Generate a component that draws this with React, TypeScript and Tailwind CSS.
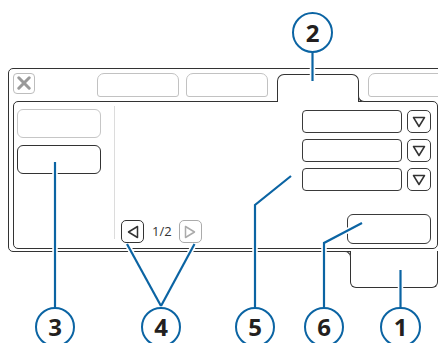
import React from "react";

function TriDown() {
  return (
    <svg width="14" height="12" viewBox="0 0 14 12">
      <polygon points="1.5,1.5 12.5,1.5 7,10.5" fill="none" stroke="#333" strokeWidth="1.5" strokeLinejoin="round" />
    </svg>
  );
}

function TriLeft({ color }: { color: string }) {
  return (
    <svg width="12" height="14" viewBox="0 0 12 14">
      <polygon points="10.5,1.5 10.5,12.5 1.5,7" fill="none" stroke={color} strokeWidth="1.5" strokeLinejoin="round" />
    </svg>
  );
}

function TriRight({ color }: { color: string }) {
  return (
    <svg width="12" height="14" viewBox="0 0 12 14">
      <polygon points="1.5,1.5 1.5,12.5 10.5,7" fill="none" stroke={color} strokeWidth="1.5" strokeLinejoin="round" />
    </svg>
  );
}

function FieldRow() {
  return (
    <div className="flex items-center justify-end gap-[5px]">
      <div className="w-[100px] h-[23px] border-[1.5px] border-[#3a3a3a] rounded-[4px]" />
      <div className="w-[24px] h-[23px] border-[1.5px] border-[#3a3a3a] rounded-[5px] flex items-center justify-center">
        <TriDown />
      </div>
    </div>
  );
}

const BLUE = "#0b64a3";

type Pt = [number, number];
const leaders: Pt[][] = [
  [[312.5, 52], [312.5, 81]],
  [[55, 162], [55, 307]],
  [[127, 244], [161, 306]],
  [[194.5, 244], [161, 306]],
  [[255, 307], [255, 205], [291, 176]],
  [[324, 307], [324, 243], [362, 223]],
  [[400.5, 270], [400.5, 307]],
];

const circles: { n: string; x: number; y: number }[] = [
  { n: "2", x: 312.5, y: 32.5 },
  { n: "3", x: 55, y: 327 },
  { n: "4", x: 161, y: 327 },
  { n: "5", x: 255, y: 327 },
  { n: "6", x: 324, y: 327 },
  { n: "1", x: 400.5, y: 327 },
];

export default function App() {
  return (
    <div className="relative w-[438px] h-[343px] overflow-hidden bg-white font-['Open_Sans',sans-serif]">
      <div className="pt-[67.5px] pl-[8px]">
        {/* outer window frame */}
        <div className="w-[460px] border-[1.5px] border-[#333] rounded-[5px] pl-[3.5px] pb-[2.5px]">
          {/* header: close + tabs */}
          <div className="flex items-end h-[32px]">
            <div className="relative mb-[7px] w-[22px] h-[21px] border-[1.5px] border-[#bdbdbd] rounded-[4px] flex items-center justify-center">
              <svg width="14" height="14" viewBox="0 0 14 14">
                <line x1="1.8" y1="1.8" x2="12.2" y2="12.2" stroke="#9a9a9a" strokeWidth="3" strokeLinecap="round" />
                <line x1="12.2" y1="1.8" x2="1.8" y2="12.2" stroke="#9a9a9a" strokeWidth="3" strokeLinecap="round" />
              </svg>
            </div>
            <div className="ml-[62px] mb-[4px] w-[82px] h-[24px] border-[1.5px] border-[#c2c2c2] rounded-t-[7px] rounded-b-[3px]" />
            <div className="ml-[7px] mb-[4px] w-[82px] h-[24px] border-[1.5px] border-[#c2c2c2] rounded-t-[7px] rounded-b-[3px]" />
            <div className="relative z-10 ml-[9px] -mb-[1.5px] w-[82px] h-[28.5px] bg-white border-[1.5px] border-b-0 border-[#333] rounded-t-[7px]">
              <div className="absolute left-full bottom-0 w-[8px] h-[8px] bg-white border-l-[1.5px] border-b-[1.5px] border-[#333] rounded-bl-[6px]" />
            </div>
            <div className="ml-[9px] mb-[4px] w-[82px] h-[24px] border-[1.5px] border-[#c2c2c2] rounded-t-[7px] rounded-b-[3px]" />
          </div>
          {/* inner panel */}
          <div className="flex w-[425px] h-[148px] border-[1.5px] border-[#333] rounded-[5px]">
            <div className="w-[100.5px] pl-[3.5px] pt-[7.5px] flex flex-col gap-[7px]">
              <div className="w-[84px] h-[29px] border-[1.5px] border-[#c6c6c6] rounded-[6px]" />
              <div className="w-[84px] h-[29px] border-[1.5px] border-[#333] rounded-[6px]" />
            </div>
            <div className="w-px mt-[4.5px] mb-[8.5px] bg-[#dcdcdc]" />
            <div className="flex-1 flex flex-col pt-[8.5px] pr-[5.5px] pb-[3.5px]">
              <div className="flex flex-col gap-[6px]">
                <FieldRow />
                <FieldRow />
                <FieldRow />
              </div>
              <div className="mt-auto flex items-end justify-between pl-[6px]">
                <div className="flex items-center mb-[1px]">
                  <div className="w-[23px] h-[23px] border-[1.5px] border-[#333] rounded-[5px] flex items-center justify-center">
                    <TriLeft color="#333" />
                  </div>
                  <span className="ml-[8px] mr-[7px] text-[13px] leading-none text-[#333]">1/2</span>
                  <div className="w-[23px] h-[23px] border-[1.5px] border-[#ababab] rounded-[5px] flex items-center justify-center">
                    <TriRight color="#ababab" />
                  </div>
                </div>
                <div className="w-[84px] h-[30px] border-[1.5px] border-[#3a3a3a] rounded-[6px]" />
              </div>
            </div>
          </div>
        </div>
        {/* bottom tab */}
        <div className="relative z-10 -mt-[1.5px] ml-[342px] w-[88px] h-[37.5px] bg-white border-[1.5px] border-t-0 border-[#333] rounded-b-[6px]">
          <div className="absolute -left-[10px] top-0 w-[10px] h-[8px] bg-white border-t-[1.5px] border-r-[1.5px] border-[#333] rounded-tr-[6px]" />
        </div>
      </div>

      {/* callouts */}
      <svg className="absolute inset-0 z-20 pointer-events-none" width="438" height="343" viewBox="0 0 438 343">
        {leaders.map((p, i) => (
          <polyline key={"h" + i} points={p.map((q) => q.join(",")).join(" ")} fill="none" stroke="#fff" strokeWidth="5.5" strokeLinejoin="miter" />
        ))}
        {leaders.map((p, i) => (
          <polyline key={"b" + i} points={p.map((q) => q.join(",")).join(" ")} fill="none" stroke={BLUE} strokeWidth="2.2" strokeLinejoin="miter" />
        ))}
      </svg>
      {circles.map((c) => (
        <div
          key={c.n}
          className="absolute z-30 w-[40.5px] h-[40.5px] rounded-full border-[2.5px] border-[#0b64a3] bg-white flex items-center justify-center text-[24px] font-bold leading-none text-[#231f20]"
          style={{ left: c.x - 20.25, top: c.y - 20.25 }}
        >
          {c.n}
        </div>
      ))}
    </div>
  );
}
